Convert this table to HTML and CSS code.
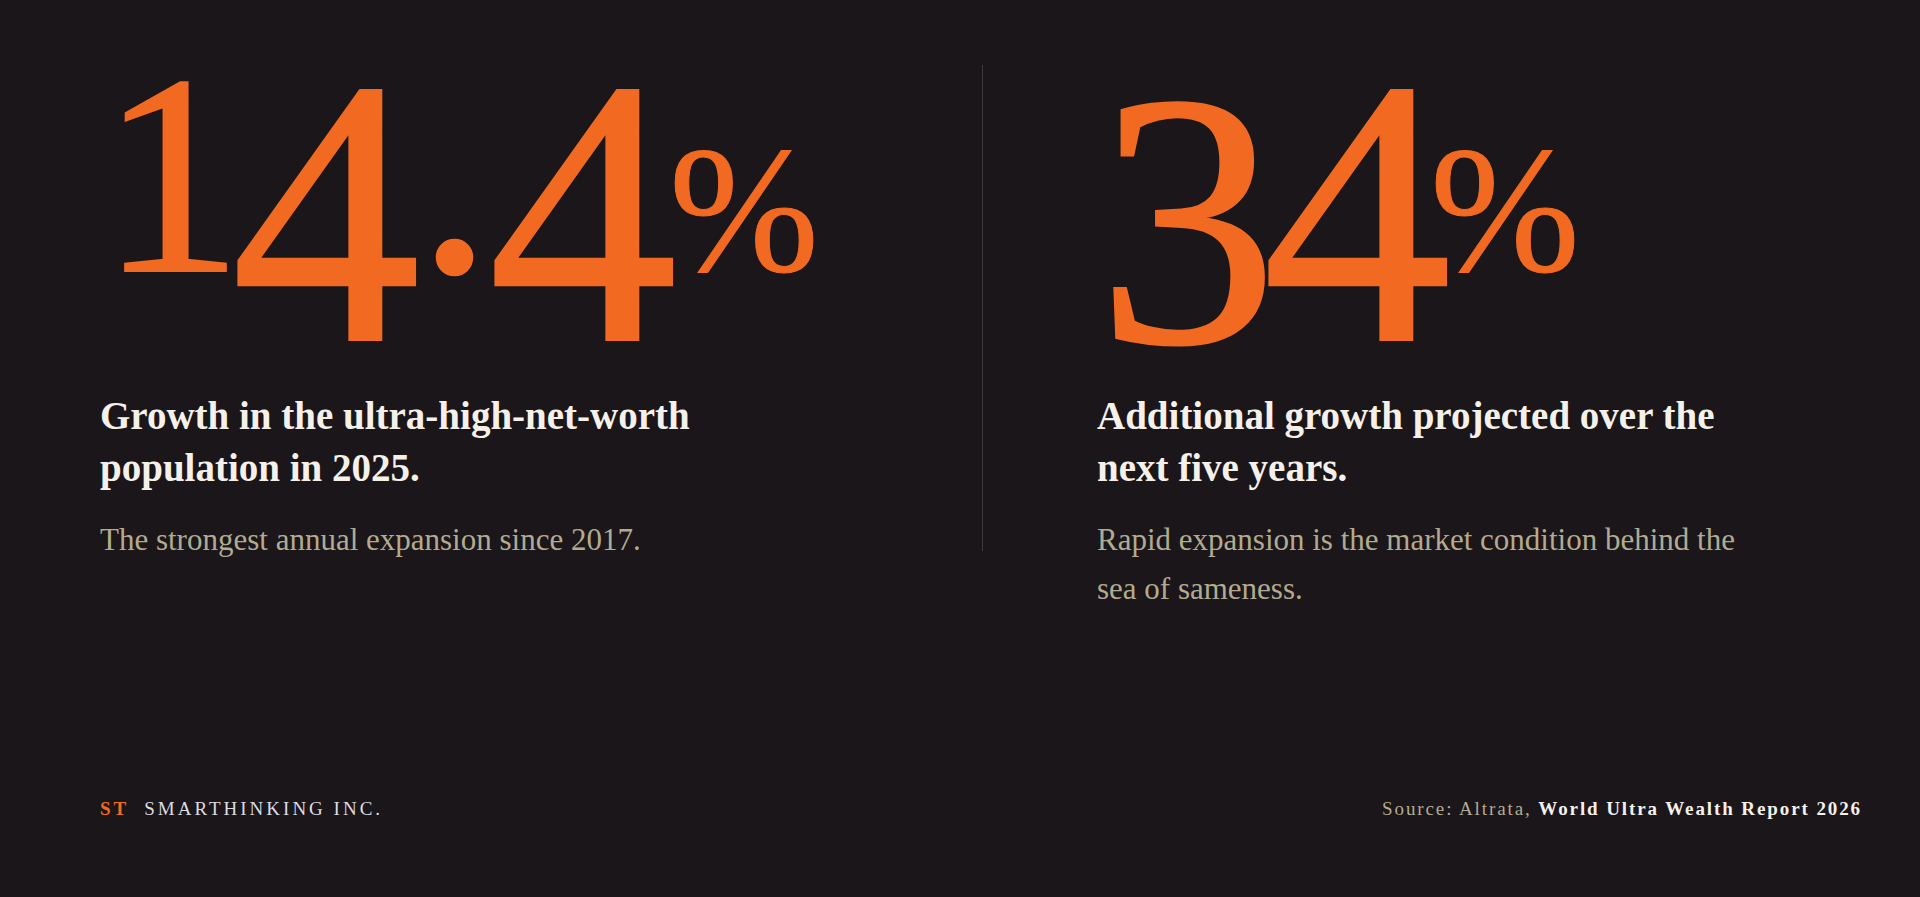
FILE: index.html
```html
<!DOCTYPE html>
<html lang="en">
<head>
<meta charset="utf-8">
<title>Smarthinking — Ultra Wealth</title>
<link rel="stylesheet" href="styles.css">
</head>
<body>
<main class="page">
  <section class="stats">
    <article class="stat">
      <div class="stat__value"><span class="fig fig--one">1</span><span class="fig fig--four fig--before-dot">4</span><span class="fig fig--dot">.</span><span class="fig fig--four">4</span><span class="stat__unit">%</span></div>
      <h2 class="stat__title">Growth in the ultra-high-net-worth population in 2025.</h2>
      <p class="stat__note">The strongest annual expansion since 2017.</p>
    </article>
    <div class="stats__divider"></div>
    <article class="stat stat--right">
      <div class="stat__value"><span class="fig fig--three">3</span><span class="fig fig--four">4</span><span class="stat__unit">%</span></div>
      <h2 class="stat__title">Additional growth projected over the next five years.</h2>
      <p class="stat__note">Rapid expansion is the market condition behind the sea of sameness.</p>
    </article>
  </section>
  <footer class="footer">
    <div class="brand"><span class="brand__mark">ST</span><span class="brand__name">SMARTHINKING INC.</span></div>
    <div class="source">Source: Altrata, <strong class="source__title">World Ultra Wealth Report 2026</strong></div>
  </footer>
</main>
</body>
</html>
```
FILE: styles.css
```css
* { box-sizing: border-box; }
html, body { margin: 0; padding: 0; }
body {
  background: #1a1619;
  font-family: "Liberation Serif", "Times New Roman", serif;
  color: #f4f0ea;
}
.page {
  height: 897px;
  display: flex;
  flex-direction: column;
  padding: 0 58px 0 100px;
}
.stats {
  display: grid;
  grid-template-columns: 882px 1px 1fr;
  padding-top: 32px;
}
.stats__divider {
  align-self: start;
  margin-top: 33px;
  height: 486px;
  background: #3e383c;
}
.stat--right { padding-left: 114px; }
.stat__value {
  font-size: 286px;
  line-height: 286px;
  height: 286px;
  color: #f26a21;
  white-space: nowrap;
  -webkit-text-stroke: 2px #f26a21;
}
.fig { line-height: 0; }
.fig--one { letter-spacing: -12px; }
.fig--four {
  font-size: 380px;
  vertical-align: -69px;
  letter-spacing: -14px;
}
.fig--before-dot { letter-spacing: -4px; }
.fig--three {
  font-size: 362px;
  vertical-align: -71px;
  letter-spacing: -16px;
}
.fig--dot {
  font-size: 300px;
  letter-spacing: -4px;
}
.stat__unit {
  font-size: 180px;
  line-height: 0;
  margin-left: 5px;
  -webkit-text-stroke: 1px #f26a21;
}
.stat--right .stat__unit { margin-left: -8px; }
.stat__title {
  margin: 72px 0 0;
  max-width: 665px;
  font-size: 39px;
  line-height: 52px;
  font-weight: 700;
  color: #f5f1ea;
}
.stat__note {
  margin: 21px 0 0;
  max-width: 665px;
  font-size: 31px;
  line-height: 49px;
  color: #b3ab91;
}
.footer {
  margin-top: auto;
  padding-bottom: 76px;
  display: flex;
  justify-content: space-between;
  align-items: baseline;
  font-size: 19px;
  line-height: 24px;
}
.brand__mark {
  color: #f26a21;
  font-weight: 700;
  letter-spacing: 3px;
  margin-right: 15px;
}
.brand__name {
  color: #dcdde2;
  letter-spacing: 3px;
}
.source {
  color: #b3ab91;
  letter-spacing: 1.9px;
}
.source__title {
  color: #f4f0ea;
  font-weight: 700;
}
```
